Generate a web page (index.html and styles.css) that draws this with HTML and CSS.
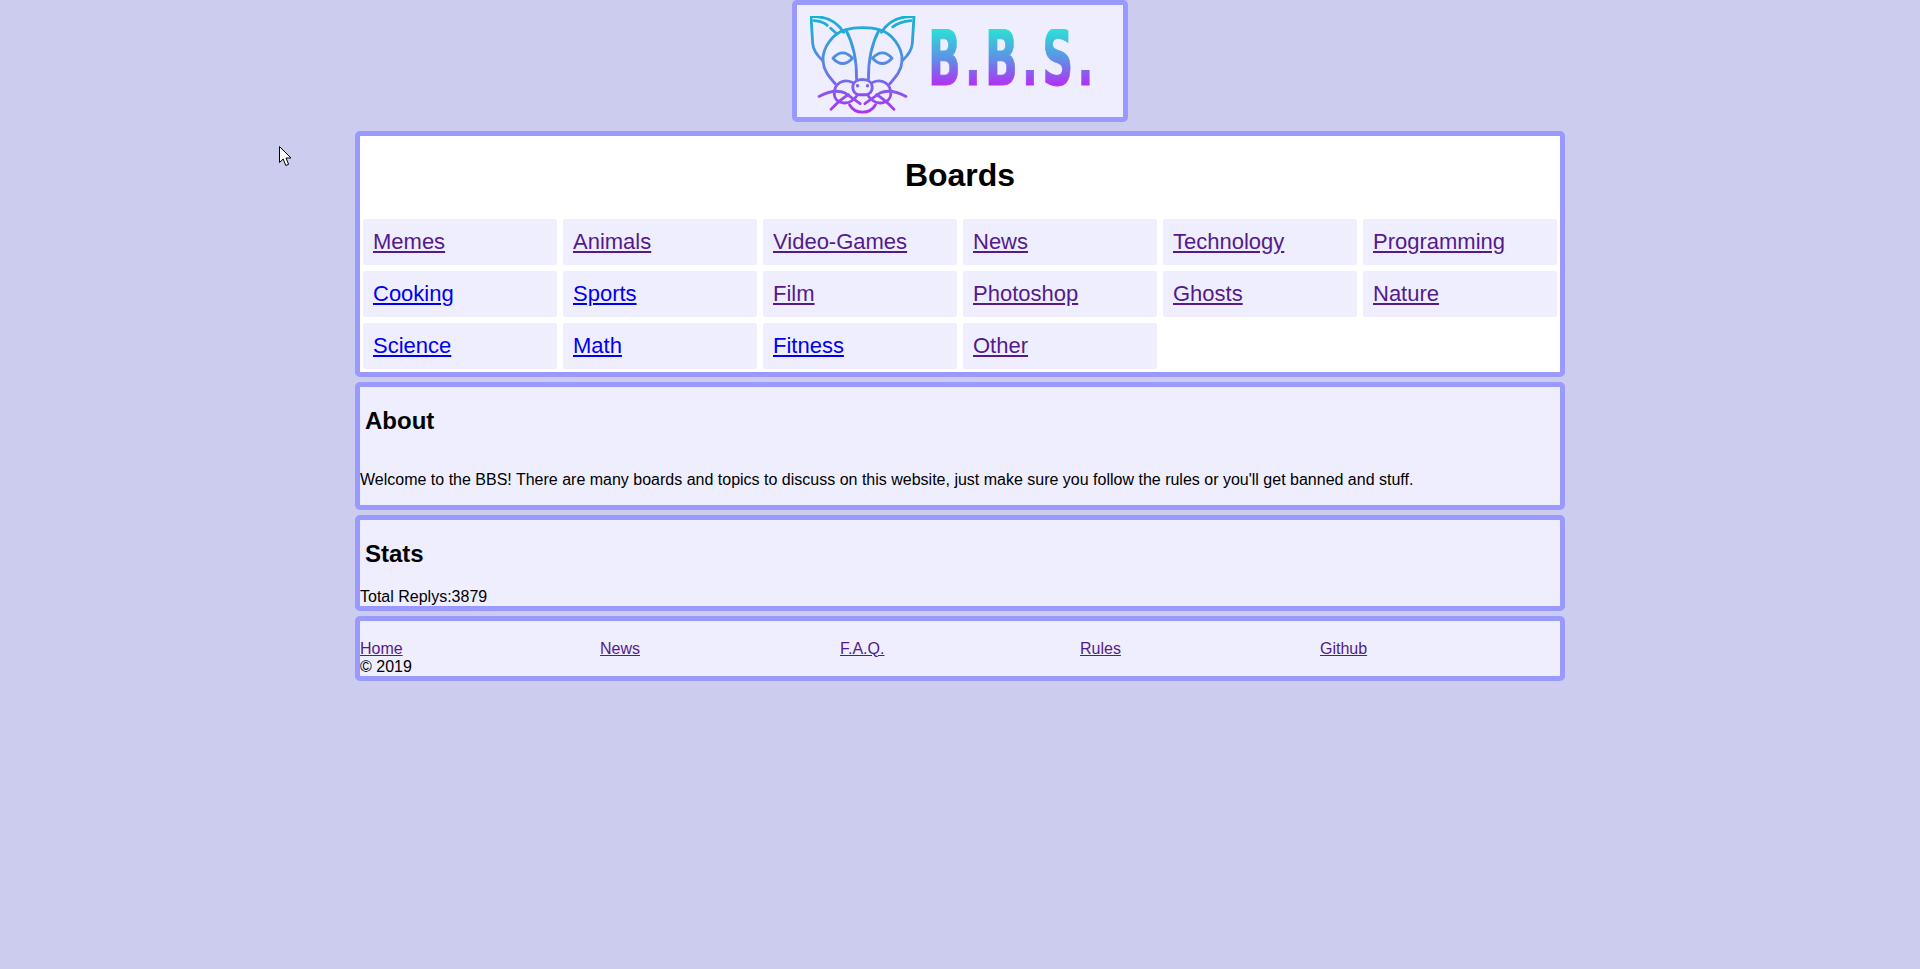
FILE: index.html
```html
<!DOCTYPE html>
<html lang="en">
<head>
  <meta charset="UTF-8" />
  <meta name="viewport" content="width=device-width, initial-scale=1.0"/>
  <title>B.B.S.</title>
  <link rel="stylesheet" href="styles.css">
</head>
<body>

<header class="logo">
  <svg class="logo-cat" viewBox="90 48 320 295" width="107" height="98" fill="none" stroke="url(#catFade)" stroke-width="8.5" stroke-linecap="round" stroke-linejoin="round">
    <defs>
      <linearGradient id="catFade" gradientUnits="userSpaceOnUse" x1="0" y1="48" x2="0" y2="343">
        <stop offset="0" stop-color="#12b6cf"/>
        <stop offset="0.5" stop-color="#5a86e6"/>
        <stop offset="1" stop-color="#b030f2"/>
      </linearGradient>
    </defs>
    <!-- ears -->
    <path d="M128 183C108 165 98 150 97 130L92 50C135 48 170 65 190 97"/>
    <path d="M366 183C386 165 396 150 397 130L402 50C359 48 324 65 304 97"/>
    <path d="M101 62C118 63 131 68 141 76M151 85L168 100"/>
    <path d="M393 62C370 64 352 70 338 81"/>
    <!-- head -->
    <path d="M165 252C150 235 130 215 128 183C126 140 160 100 195 90C225 81 270 81 299 90C334 100 368 140 366 183C364 215 344 235 329 252"/>
    <path d="M197 90C216 125 230 170 229 238"/>
    <path d="M297 90C278 125 264 170 265 238"/>
    <!-- eyes -->
    <path d="M158 175Q187 143 217 175Q187 207 158 175Z"/>
    <path d="M277 175Q307 143 336 175Q307 207 277 175Z"/>
    <!-- nose and muzzle -->
    <path d="M218 258C222 233 272 233 276 258C278 275 268 285 256 285L238 285C226 285 216 275 218 258Z"/>
    <path d="M232 258h.1M262 258h.1" stroke-width="10"/>
    <path d="M217 248C190 235 160 250 162 285C164 310 205 325 232 286"/>
    <path d="M277 248C304 235 334 250 332 285C330 310 289 325 262 286"/>
    <path d="M208 315C225 345 269 345 286 315"/>
    <!-- whiskers -->
    <path d="M116 290C145 275 170 268 195 280L240 312"/>
    <path d="M378 290C349 275 324 268 299 280L254 312"/>
    <path d="M152 329C170 310 185 295 205 285"/>
    <path d="M342 329C324 310 309 295 289 285"/>
  </svg>
  <span class="logo-text">B.B.S.</span>
</header>

<main class="page">
  <section class="panel boards">
    <h1>Boards</h1>
    <div class="board-grid">
      <div class="board"><a class="seen" href="#">Memes</a></div>
      <div class="board"><a class="seen" href="#">Animals</a></div>
      <div class="board"><a class="seen" href="#">Video-Games</a></div>
      <div class="board"><a class="seen" href="#">News</a></div>
      <div class="board"><a class="seen" href="#">Technology</a></div>
      <div class="board"><a class="seen" href="#">Programming</a></div>
      <div class="board"><a class="fresh" href="#">Cooking</a></div>
      <div class="board"><a class="fresh" href="#">Sports</a></div>
      <div class="board"><a class="seen" href="#">Film</a></div>
      <div class="board"><a class="seen" href="#">Photoshop</a></div>
      <div class="board"><a class="seen" href="#">Ghosts</a></div>
      <div class="board"><a class="seen" href="#">Nature</a></div>
      <div class="board"><a class="fresh" href="#">Science</a></div>
      <div class="board"><a class="fresh" href="#">Math</a></div>
      <div class="board"><a class="fresh" href="#">Fitness</a></div>
      <div class="board"><a class="seen" href="#">Other</a></div>
    </div>
  </section>

  <section class="panel about">
    <h2>About</h2>
    <p>Welcome to the BBS! There are many boards and topics to discuss on this website, just make sure you follow the rules or you'll get banned and stuff.</p>
  </section>

  <section class="panel stats">
    <h2>Stats</h2>
    <div>Total Replys:3879</div>
  </section>

  <footer class="panel footer">
    <nav class="footer-links">
      <a class="seen" href="#">Home</a>
      <a class="seen" href="#">News</a>
      <a class="seen" href="#">F.A.Q.</a>
      <a class="seen" href="#">Rules</a>
      <a class="seen" href="#">Github</a>
    </nav>
    <div>&copy; 2019</div>
  </footer>
</main>

<svg class="cursor" viewBox="0 0 13 21" width="13" height="21">
  <path d="M.5 .5V16.5L4.2 13L6.8 19.5L9.6 18.3L7 12H12Z" fill="#fff" stroke="#000" stroke-width="1"/>
</svg>

</body>
</html>
```

FILE: styles.css
```css
body {
  margin: 0;
  background: #ccccee;
  font-family: "Liberation Sans", Arial, sans-serif;
  font-size: 16px;
  color: #000;
}
.logo {
  display: flex;
  align-items: flex-start;
  gap: 11px;
  box-sizing: border-box;
  width: 336px;
  height: 122px;
  margin: 0 auto 9px;
  padding: 11px 0 0 13px;
  background: #eeeeff;
  border: 5px solid #9999ff;
  border-radius: 5px;
}
.logo-cat {
  flex: none;
}
.logo-text {
  flex: none;
  margin-top: 13px;
  padding: 2px 0;
  font-family: "DejaVu Sans", sans-serif;
  font-weight: bold;
  font-size: 77px;
  line-height: 56px;
  letter-spacing: 7px;
  background: linear-gradient(#2ae2d6, #5f8fe6 50%, #c021f5);
  background-clip: text;
  -webkit-background-clip: text;
  color: transparent;
  -webkit-text-stroke: 1px transparent;
  transform: scaleX(0.56);
  transform-origin: left top;
}
.page {
  width: 1210px;
  margin: 0 auto;
}
.panel {
  margin-bottom: 5px;
  background: #eeeeff;
  border: 5px solid #9999ff;
  border-radius: 5px;
}
.boards {
  background: #fff;
}
.boards h1 {
  text-align: center;
}
.board-grid {
  display: grid;
  grid-template-columns: repeat(6, 194px);
  gap: 6px;
  padding: 3px;
}
.board {
  padding: 10px;
  background: #eeeeff;
  border-radius: 3px;
  font-size: 22px;
  line-height: 26px;
}
a.seen {
  color: #551a8b;
}
a.fresh {
  color: #0000ee;
}
.panel h2 {
  padding-left: 5px;
}
.about h2 {
  margin-bottom: 36px;
}
.footer {
  padding-top: 19px;
}
.footer-links {
  display: grid;
  grid-template-columns: repeat(5, 240px);
}
.footer-links a {
  justify-self: start;
}
.cursor {
  position: absolute;
  left: 279px;
  top: 146px;
}
```
